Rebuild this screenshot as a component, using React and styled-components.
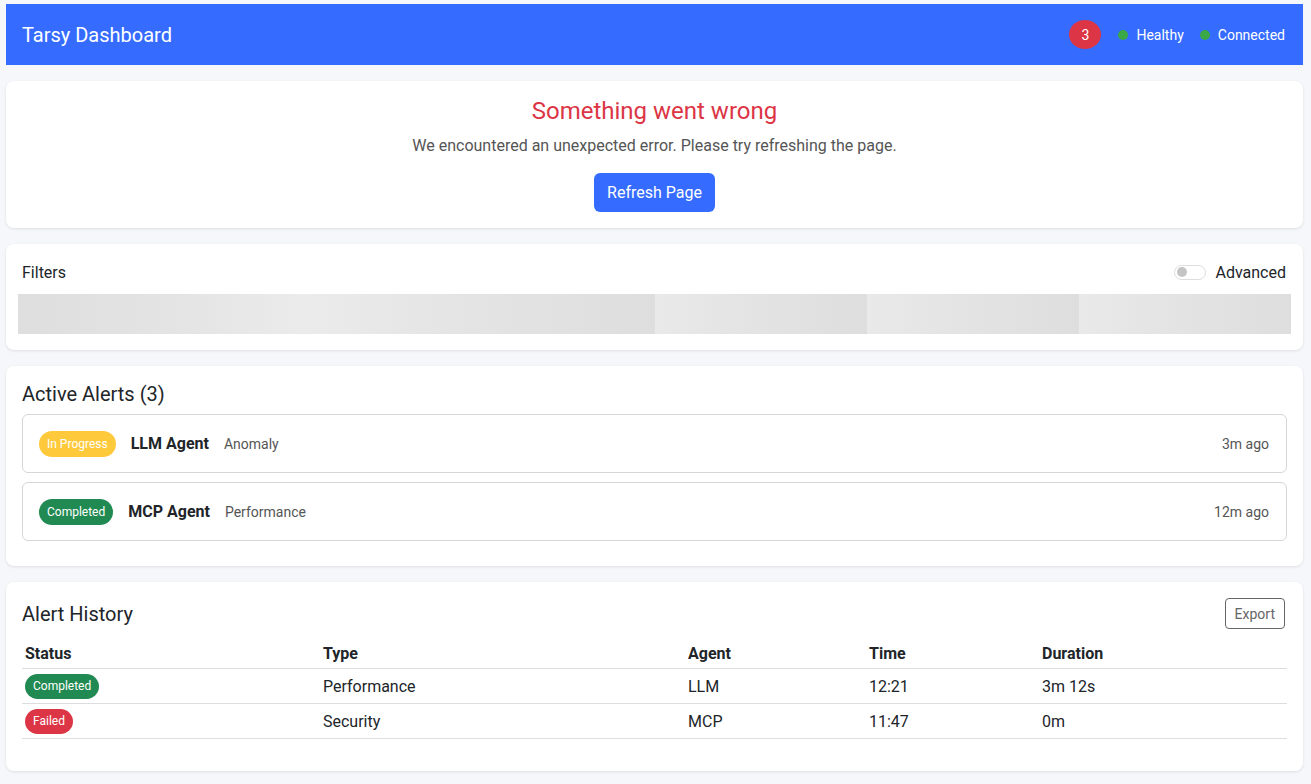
import React from 'react'
import styled, { createGlobalStyle } from 'styled-components'

const GlobalStyle = createGlobalStyle`
  * { box-sizing: border-box; }
  body {
    margin: 0;
    background: #f5f7fa;
    font-family: Roboto, "Noto Sans", "Liberation Sans", sans-serif;
    color: #212529;
  }
`

const Page = styled.div`
  padding: 4px 8px 12px 6px;
  display: flex;
  flex-direction: column;
  gap: 16px;
`

const Header = styled.header`
  height: 61px;
  background: #356cff;
  color: #fff;
  display: flex;
  align-items: center;
  justify-content: space-between;
  padding: 0 18px 0 16px;
`

const Brand = styled.h1`
  margin: 0;
  font-size: 20px;
  font-weight: 400;
`

const HeaderRight = styled.div`
  display: flex;
  align-items: center;
  gap: 16px;
  font-size: 14px;
`

const CountBadge = styled.span`
  width: 32px;
  height: 29px;
  border-radius: 50%;
  background: #dc3545;
  display: flex;
  align-items: center;
  justify-content: center;
  font-size: 14px;
  margin-right: 1px;
`

const Status = styled.span`
  display: flex;
  align-items: center;
  gap: 8px;
  &::before {
    content: '';
    width: 10px;
    height: 10px;
    border-radius: 50%;
    background: #3aa845;
  }
`

const Card = styled.section`
  background: #fff;
  border-radius: 8px;
  box-shadow: 0 1px 3px rgba(0, 0, 0, 0.1);
  padding: ${p => p.$pad || '16px'};
`

const ErrorCard = styled(Card)`
  display: flex;
  flex-direction: column;
  align-items: center;
  padding: 15px 16px 16px;
`

const ErrorTitle = styled.h2`
  margin: 0;
  font-size: 24px;
  font-weight: 400;
  color: #dc3545;
  line-height: 30px;
`

const ErrorText = styled.p`
  margin: 10px 0 0;
  font-size: 16px;
  color: #555;
  line-height: 20px;
`

const PrimaryButton = styled.button`
  margin-top: 17px;
  height: 39px;
  padding: 0 13px;
  border: none;
  border-radius: 6px;
  background: #356cff;
  color: #fff;
  font: inherit;
  font-size: 16px;
`

const FilterHead = styled.div`
  display: flex;
  justify-content: space-between;
  align-items: center;
  padding: 0 5px 0 4px;
  height: 24px;
  margin: 4px 0 10px;
`

const FilterLabel = styled.span`
  font-size: 16px;
`

const ToggleWrap = styled.label`
  display: flex;
  align-items: center;
  gap: 9px;
  font-size: 16px;
`

const Toggle = styled.span`
  width: 32px;
  height: 15px;
  border-radius: 8px;
  border: 1px solid #ddd;
  background: #fff;
  display: flex;
  align-items: center;
  padding-left: 2px;
  &::before {
    content: '';
    width: 10px;
    height: 10px;
    border-radius: 50%;
    background: #c4c4c4;
  }
`

const SkeletonRow = styled.div`
  display: grid;
  grid-template-columns: 3fr 1fr 1fr 1fr;
  height: 40px;
`

const Skeleton = styled.div`
  background: ${p =>
    p.$wide
      ? 'linear-gradient(90deg, #dedede 0%, #e4e4e4 25%, #ebebeb 45%, #e4e4e4 70%, #dedede 100%)'
      : 'linear-gradient(90deg, #e9e9e9 0%, #e3e3e3 50%, #dedede 100%)'};
`

const SectionTitle = styled.h2`
  margin: 0;
  font-size: 20px;
  font-weight: 400;
  line-height: 24px;
`

const AlertList = styled.div`
  display: flex;
  flex-direction: column;
  gap: 9px;
  margin-top: 8px;
  padding-bottom: 9px;
`

const AlertItem = styled.div`
  height: 59px;
  border: 1px solid #d6d6d6;
  border-radius: 6px;
  display: flex;
  align-items: center;
  padding: 0 17px 0 16px;
`

const Pill = styled.span`
  display: inline-flex;
  align-items: center;
  height: ${p => p.$h || 26}px;
  padding: 0 8px;
  border-radius: 13px;
  font-size: 12px;
  color: #fff;
  background: ${p => p.$color};
`

const AgentName = styled.span`
  font-size: 16px;
  font-weight: 700;
  margin-left: 15px;
`

const AlertType = styled.span`
  font-size: 14px;
  color: #555;
  margin-left: 15px;
`

const TimeAgo = styled.span`
  margin-left: auto;
  font-size: 14px;
  color: #555;
`

const HistoryHead = styled.div`
  display: flex;
  justify-content: space-between;
  align-items: center;
`

const OutlineButton = styled.button`
  height: 31px;
  padding: 0 9px;
  border: 1px solid #666;
  border-radius: 4px;
  background: #fff;
  color: #666;
  font: inherit;
  font-size: 14px;
  margin-right: 2px;
`

const Table = styled.table`
  width: 100%;
  border-collapse: collapse;
  margin-top: 10px;
  margin-bottom: 16px;
  table-layout: fixed;
`

const Th = styled.th`
  text-align: left;
  font-size: 16px;
  font-weight: 700;
  padding: 5px 3px;
  border-bottom: 1px solid #ddd;
`

const Td = styled.td`
  font-size: 16px;
  padding: 4px 3px;
  height: 35px;
  border-bottom: 1px solid #ddd;
`

const active = [
  { status: 'In Progress', color: '#ffc93c', agent: 'LLM Agent', type: 'Anomaly', ago: '3m ago' },
  { status: 'Completed', color: '#218a52', agent: 'MCP Agent', type: 'Performance', ago: '12m ago' },
]

const history = [
  { status: 'Completed', color: '#218a52', type: 'Performance', agent: 'LLM', time: '12:21', duration: '3m 12s' },
  { status: 'Failed', color: '#dc3545', type: 'Security', agent: 'MCP', time: '11:47', duration: '0m' },
]

export default function App() {
  return (
    <>
      <GlobalStyle />
      <Page>
        <Header>
          <Brand>Tarsy Dashboard</Brand>
          <HeaderRight>
            <CountBadge>3</CountBadge>
            <Status>Healthy</Status>
            <Status>Connected</Status>
          </HeaderRight>
        </Header>

        <ErrorCard>
          <ErrorTitle>Something went wrong</ErrorTitle>
          <ErrorText>We encountered an unexpected error. Please try refreshing the page.</ErrorText>
          <PrimaryButton>Refresh Page</PrimaryButton>
        </ErrorCard>

        <Card $pad="12px 12px 16px">
          <FilterHead>
            <FilterLabel>Filters</FilterLabel>
            <ToggleWrap>
              <Toggle />
              Advanced
            </ToggleWrap>
          </FilterHead>
          <SkeletonRow>
            <Skeleton $wide />
            <Skeleton />
            <Skeleton />
            <Skeleton />
          </SkeletonRow>
        </Card>

        <Card>
          <SectionTitle>Active Alerts (3)</SectionTitle>
          <AlertList>
            {active.map(a => (
              <AlertItem key={a.agent}>
                <Pill $color={a.color}>{a.status}</Pill>
                <AgentName>{a.agent}</AgentName>
                <AlertType>{a.type}</AlertType>
                <TimeAgo>{a.ago}</TimeAgo>
              </AlertItem>
            ))}
          </AlertList>
        </Card>

        <Card>
          <HistoryHead>
            <SectionTitle>Alert History</SectionTitle>
            <OutlineButton>Export</OutlineButton>
          </HistoryHead>
          <Table>
            <colgroup>
              <col style={{ width: 298 }} />
              <col style={{ width: 365 }} />
              <col style={{ width: 181 }} />
              <col style={{ width: 173 }} />
              <col />
            </colgroup>
            <thead>
              <tr>
                <Th>Status</Th>
                <Th>Type</Th>
                <Th>Agent</Th>
                <Th>Time</Th>
                <Th>Duration</Th>
              </tr>
            </thead>
            <tbody>
              {history.map(h => (
                <tr key={h.time}>
                  <Td><Pill $color={h.color} $h={25}>{h.status}</Pill></Td>
                  <Td>{h.type}</Td>
                  <Td>{h.agent}</Td>
                  <Td>{h.time}</Td>
                  <Td>{h.duration}</Td>
                </tr>
              ))}
            </tbody>
          </Table>
        </Card>
      </Page>
    </>
  )
}
